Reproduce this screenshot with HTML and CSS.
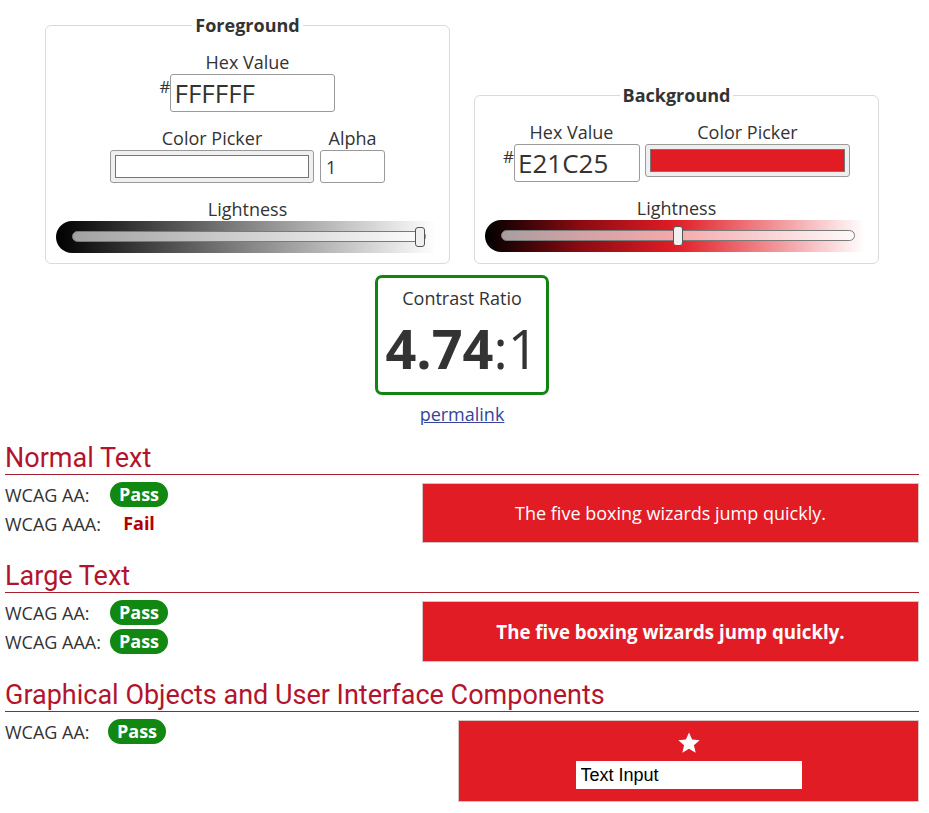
FILE: index.html
```html
<!DOCTYPE html>
<html lang="en">
<head>
<meta charset="utf-8">
<title>Contrast Checker</title>
<link rel="stylesheet" href="styles.css">
</head>
<body>
<div class="page">
  <div class="pickers">
    <fieldset class="panel">
      <legend>Foreground</legend>
      <div class="panel-body">
        <div class="group">
          <div class="label">Hex Value</div>
          <div class="hexrow"><span class="hash">#</span><input class="hex hex-fg" type="text" value="FFFFFF"></div>
        </div>
        <div class="pairrow">
          <div class="group">
            <div class="label">Color Picker</div>
            <div class="picker picker-fg"><span class="swatch" style="background:#ffffff"></span></div>
          </div>
          <div class="group">
            <div class="label">Alpha</div>
            <input class="alpha" type="text" value="1">
          </div>
        </div>
        <div class="group">
          <div class="label">Lightness</div>
          <div class="slider slider-fg"><div class="track"><span class="thumb" style="left:calc((100% - 10px) * 1)"></span></div></div>
        </div>
      </div>
    </fieldset>
    <fieldset class="panel panel-bg">
      <legend>Background</legend>
      <div class="panel-body">
        <div class="pairrow top">
          <div class="group">
            <div class="label">Hex Value</div>
            <div class="hexrow"><span class="hash">#</span><input class="hex hex-bg" type="text" value="E21C25"></div>
          </div>
          <div class="group">
            <div class="label">Color Picker</div>
            <div class="picker picker-bg"><span class="swatch" style="background:#e21c25"></span></div>
          </div>
        </div>
        <div class="group">
          <div class="label">Lightness</div>
          <div class="slider slider-bg"><div class="track"><span class="thumb" style="left:calc((100% - 10px) * 0.5)"></span></div></div>
        </div>
      </div>
    </fieldset>
  </div>

  <div class="ratio-box">
    <div class="ratio-label">Contrast Ratio</div>
    <div class="ratio"><b>4.74</b>:1</div>
  </div>
  <a class="permalink" href="#">permalink</a>

  <section class="result">
    <h2>Normal Text</h2>
    <div class="result-body">
      <div class="checks checks-text">
        <div class="check"><span class="level">WCAG AA:</span><span class="badge pass">Pass</span></div>
        <div class="check"><span class="level">WCAG AAA:</span><span class="badge fail">Fail</span></div>
      </div>
      <div class="sample sample-normal">The five boxing wizards jump quickly.</div>
    </div>
  </section>

  <section class="result">
    <h2>Large Text</h2>
    <div class="result-body">
      <div class="checks checks-text">
        <div class="check"><span class="level">WCAG AA:</span><span class="badge pass">Pass</span></div>
        <div class="check"><span class="level">WCAG AAA:</span><span class="badge pass">Pass</span></div>
      </div>
      <div class="sample sample-large">The five boxing wizards jump quickly.</div>
    </div>
  </section>

  <section class="result">
    <h2>Graphical Objects and User Interface Components</h2>
    <div class="result-body">
      <div class="checks checks-ui">
        <div class="check"><span class="level level-ui">WCAG AA:</span><span class="badge pass">Pass</span></div>
      </div>
      <div class="sample sample-ui">
        <svg class="star" viewBox="0 0 24 24" width="24" height="24" aria-hidden="true"><path d="M12 1.5l3.1 7.1 7.6.6-5.8 5 1.8 7.5L12 17.7l-6.7 4 1.8-7.5-5.8-5 7.6-.6z" fill="#fff"/></svg>
        <input class="demo-input" type="text" value="Text Input">
      </div>
    </div>
  </section>
</div>
</body>
</html>
```

FILE: styles.css
```css
* { box-sizing: border-box; }

body {
  margin: 0;
  font-family: "Open Sans", "DejaVu Sans", sans-serif;
  font-size: 18px;
  color: #333;
  background: #fff;
}

.page {
  padding: 0 10px 0 5px;
}

/* ---------- colour pickers ---------- */
.pickers {
  display: flex;
  justify-content: center;
  align-items: flex-end;
  gap: 24px;
  margin-top: 14px;
}

.panel {
  width: 405px;
  margin: 0;
  min-width: 0;
  border: 1px solid #dadada;
  border-radius: 6px;
  padding: 15px 10px 10px;
  text-align: center;
}
.panel-bg { padding-top: 15px; padding-bottom: 11px; }

.panel legend {
  margin: 0 auto;
  padding: 0 3px;
  font-weight: 700;
  line-height: 22px;
}

.panel-body {
  display: flex;
  flex-direction: column;
  gap: 15px;
}

.group {
  display: flex;
  flex-direction: column;
  align-items: center;
}

.label {
  line-height: 22px;
  margin-bottom: 1px;
}

.hexrow {
  display: flex;
  align-items: flex-start;
}

.hash {
  font-size: 17px;
  line-height: 22px;
  margin-top: 2px;
}

.hex {
  height: 38px;
  border: 1px solid #9a9a9a;
  border-radius: 3px;
  padding: 0 3px;
  font-family: "Open Sans", sans-serif;
  font-size: 26px;
  color: #333;
  background: #fff;
}
.hex-fg { width: 165px; }
.hex-bg { width: 126px; }

.pairrow {
  display: flex;
  justify-content: center;
  align-items: flex-end;
  gap: 6px;
}
.pairrow.top {
  align-items: flex-start;
  gap: 5px;
}

.picker {
  display: flex;
  height: 33px;
  padding: 4px 4px;
  border: 1px solid #9a9a9a;
  border-radius: 3px;
  background: #efefef;
}
.picker-fg { width: 204px; }
.picker-bg { width: 205px; }
.swatch {
  flex: 1;
  border: 1px solid #767676;
}

.alpha {
  width: 65px;
  height: 33px;
  border: 1px solid #9a9a9a;
  border-radius: 3px;
  padding: 0 5px;
  font-family: "Open Sans", sans-serif;
  font-size: 18px;
  color: #333;
}

.slider {
  align-self: flex-start;
  width: 380px;
  height: 32px;
  border-radius: 16px 0 0 16px;
  padding: 10px 10px 0 16px;
}
.slider-fg { background: linear-gradient(90deg, #000 0%, #777 45%, #fff 100%); }
.slider-bg { background: linear-gradient(90deg, #000 0%, #8a0b12 25%, #e21c25 50%, #fff 100%); }

.track {
  position: relative;
  height: 11px;
  border: 1px solid #7a7a7a;
  border-radius: 6px;
  background: rgba(255, 255, 255, 0.62);
}

.thumb {
  position: absolute;
  top: -5px;
  width: 10px;
  height: 20px;
  border: 1.5px solid #555;
  border-radius: 3px;
  background: #f0f0f0;
}

/* ---------- ratio ---------- */
.ratio-box {
  width: 174px;
  margin: 11px auto 0;
  border: 3px solid #128412;
  border-radius: 7px;
  padding: 9px 0 14px;
  text-align: center;
}
.ratio-label { line-height: 22px; }
.ratio {
  margin-top: 9px;
  font-size: 54px;
  line-height: 60px;
}
.ratio b { font-weight: 700; }

.permalink {
  display: block;
  width: max-content;
  margin: 8px auto 0;
  line-height: 22px;
  color: #34449a;
  text-decoration: underline;
}

/* ---------- results ---------- */
.result h2 {
  margin: 18px 0 0;
  font-family: Roboto, "Liberation Sans", sans-serif;
  font-weight: 400;
  font-size: 27px;
  line-height: 30px;
  color: #b3142d;
  padding-bottom: 1px;
  border-bottom: 1px solid #a8202e;
}

.result-body {
  display: flex;
  align-items: flex-start;
  margin-top: 5px;
}

.checks-text { width: 417px; }
.checks-ui { width: 453px; }

.check {
  display: flex;
  align-items: center;
  height: 29px;
}
.level { width: 105px; }
.level-ui { width: 103px; }

.badge {
  width: 58px;
  height: 25px;
  line-height: 25px;
  border-radius: 13px;
  text-align: center;
  font-weight: 700;
}
.badge.pass { background: #118811; color: #fff; }
.badge.fail { color: #b30000; }

.sample {
  flex: 1;
  margin-top: 3px;
  background: #e21c25;
  border: 1px solid #d9c4c5;
  color: #fff;
}
.sample-normal,
.sample-large {
  display: flex;
  align-items: center;
  justify-content: center;
}
.sample-normal { height: 60px; }
.sample-large { height: 61px; font-weight: 700; font-size: 18.7px; }

.sample-ui {
  height: 82px;
  display: flex;
  flex-direction: column;
  align-items: center;
  padding-top: 10px;
}
.star { display: block; }
.demo-input {
  margin-top: 6px;
  width: 226px;
  height: 28px;
  border: none;
  padding: 0 5px;
  background: #fff;
  font-family: "Liberation Sans", Arial, sans-serif;
  font-size: 18px;
  color: #000;
}
```
